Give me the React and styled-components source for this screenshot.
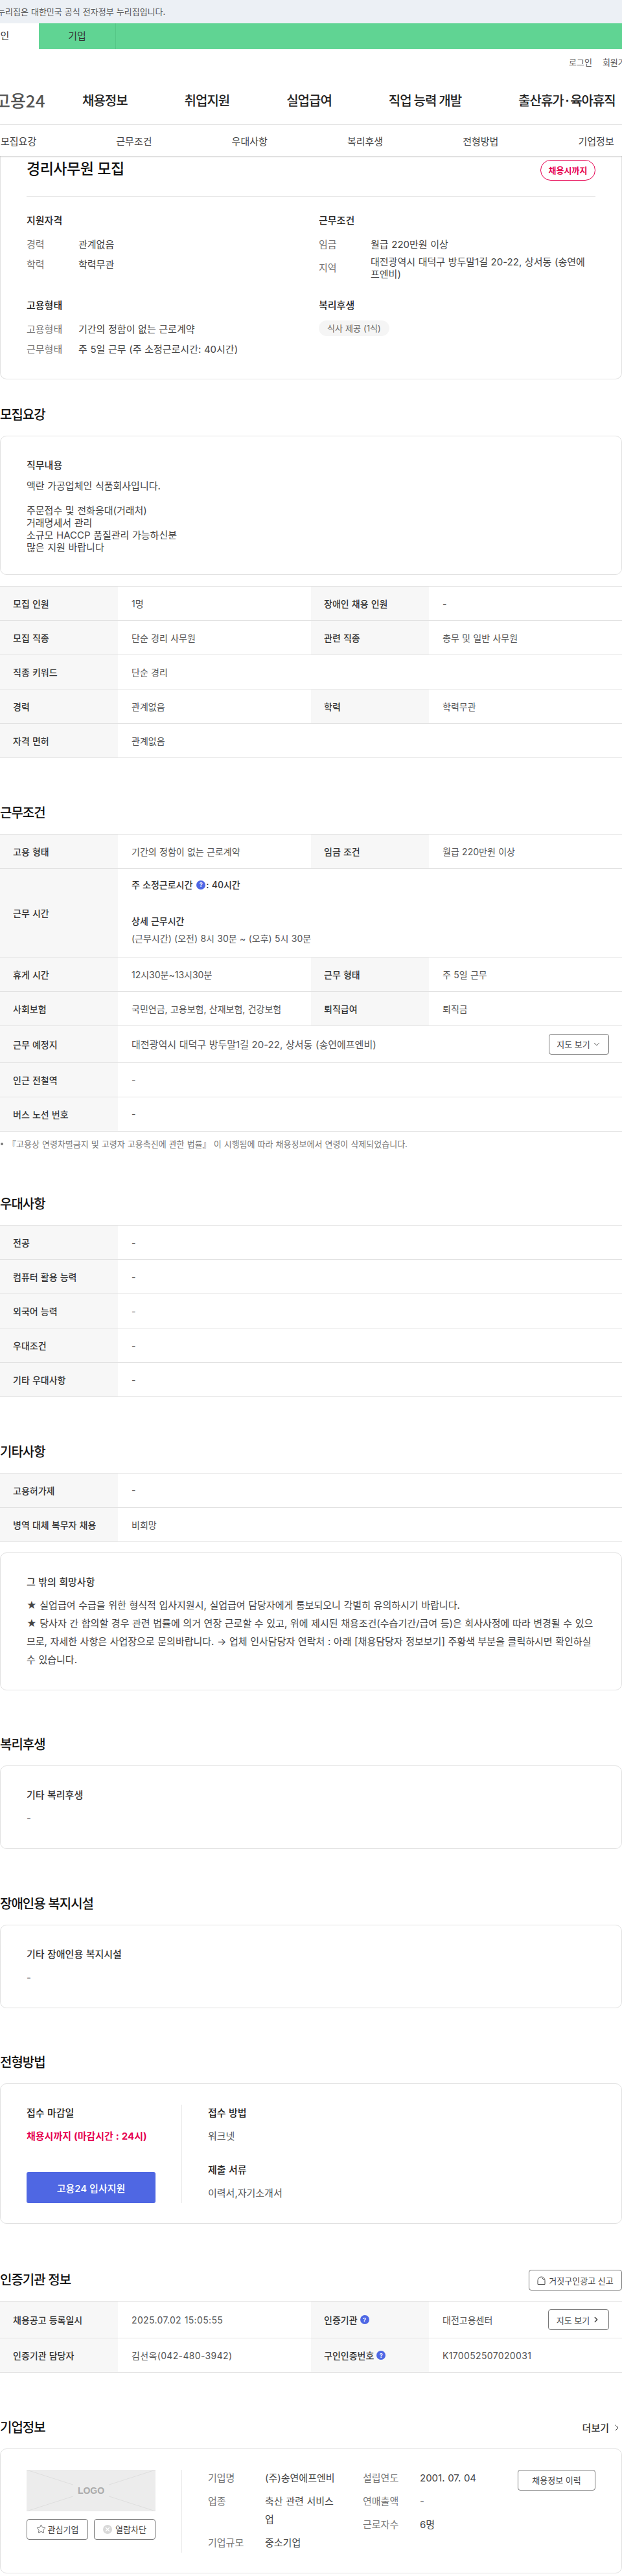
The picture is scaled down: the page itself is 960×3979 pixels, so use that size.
import React from 'react'
import styled, { createGlobalStyle } from 'styled-components'
import { ChevronDown, ChevronRight, Star } from 'lucide-react'

const GlobalStyle = createGlobalStyle`
  html, body {
    margin: 0;
    padding: 0;
    background: #fff;
    overflow-x: hidden;
  }
  body {
    font-family: Inter, "Noto Sans CJK KR", "Noto Sans", sans-serif;
    word-spacing: 0.03em;
    color: #444;
    font-size: 14px;
  }
  * { box-sizing: border-box; }
`

const Page = styled.div`
  width: 960px;
  height: 3979px;
  overflow: hidden;
`

const GovBar = styled.div`
  height: 36px;
  background: #ecf0f5;
  color: #555;
  font-size: 13px;
  line-height: 36px;
  white-space: nowrap;
  margin-left: -20px;
`

const AudienceBar = styled.div`
  display: flex;
  height: 40px;
  background: #60d493;
  margin-left: -59px;
`

const AudienceTab = styled.div`
  width: 119px;
  text-align: center;
  font-size: 15px;
  line-height: 40px;
  color: #333;
  background: ${props => (props.$active ? '#fff' : 'transparent')};
  border-right: ${props => (props.$active ? '0' : '1px solid #55c585')};
`

const UtilBar = styled.div`
  display: flex;
  gap: 16px;
  height: 40px;
  padding-left: 878px;
  font-size: 13px;
  line-height: 40px;
  white-space: nowrap;
  color: #555;
`

const MainNav = styled.div`
  display: flex;
  align-items: center;
  height: 77px;
  border-bottom: 1px solid #e6e6e6;
  margin-left: -8px;
  white-space: nowrap;
`

const Logo = styled.div`
  width: 135px;
  font-family: "Noto Sans CJK KR", sans-serif;
  font-size: 26px;
  font-weight: 500;
  color: #555;
`

const MainMenu = styled.div`
  display: flex;
  gap: 88px;
  font-family: "Noto Sans CJK KR", sans-serif;
  font-size: 20px;
  font-weight: 500;
  letter-spacing: -1px;
  color: #222;
`

const SubNav = styled.div`
  position: relative;
  z-index: 2;
  display: grid;
  grid-template-columns: repeat(6, 178.3px);
  height: 48px;
  align-items: center;
  padding-left: 1px;
  font-size: 15px;
  color: #444;
  background: #fff;
  box-shadow: 0 1px 2px rgba(0, 0, 0, 0.2);
`

const Card = styled.div`
  border: 1px solid #e1e1e1;
  border-radius: 10px;
  padding: ${props => props.$padding || '34px 40px 32px'};
  margin-top: ${props => props.$top || 0};
`

const SummaryCard = styled(Card)`
  border-top: 0;
  border-radius: 0 0 10px 10px;
  padding: 6px 40px 34px;
`

const TitleRow = styled.div`
  display: flex;
  justify-content: space-between;
  align-items: flex-start;
  height: 57px;
  border-bottom: 1px solid #e8e8e8;
  margin-bottom: 26px;
`

const JobTitle = styled.h1`
  margin: 0;
  font-size: 23px;
  font-weight: 500;
  line-height: 28px;
  letter-spacing: -0.5px;
  color: #111;
`

const DeadlineBadge = styled.div`
  width: 85px;
  height: 32px;
  border: 1px solid #e6004f;
  border-radius: 16px;
  color: #e6004f;
  font-size: 13px;
  font-weight: 700;
  line-height: 30px;
  text-align: center;
  white-space: nowrap;
`

const SummaryGrid = styled.div`
  display: grid;
  grid-template-columns: 451px 427px;
  grid-template-rows: 131px auto;
`

const GroupTitle = styled.h3`
  margin: 0 0 ${props => props.$gap || '15px'};
  font-size: 15px;
  font-weight: 500;
  line-height: ${props => props.$line || '22px'};
  color: #222;
`

const DetailList = styled.div`
  display: flex;
  flex-direction: column;
  gap: ${props => props.$gap || '9px'};
`

const DetailRow = styled.div`
  display: grid;
  grid-template-columns: 80px 1fr;
  align-items: center;
  font-size: 15px;
  line-height: 22px;
`

const DetailLabel = styled.span`
  color: #777;
`

const DetailValue = styled.span`
  max-width: 340px;
  color: #444;
  line-height: ${props => props.$line || '22px'};
`

const Chip = styled.span`
  display: inline-block;
  height: 24px;
  padding: 0 13px;
  border-radius: 12px;
  background: #f5f5f5;
  color: #666;
  font-size: 13px;
  line-height: 24px;
  margin-top: -4px;
`

const Section = styled.section`
  margin-top: ${props => props.$top || '70.5px'};
`

const SectionHead = styled.div`
  display: flex;
  align-items: center;
  justify-content: space-between;
  min-height: 28px;
  margin-bottom: ${props => props.$gap || '18px'};
`

const SectionTitle = styled.h2`
  margin: 0;
  font-size: 20px;
  font-weight: 500;
  line-height: 28px;
  letter-spacing: -1px;
  color: #111;
`

const MoreLink = styled.div`
  display: flex;
  align-items: center;
  gap: 4px;
  font-size: 15px;
  font-weight: 500;
  color: #333;
`

const CardTitle = styled.h4`
  margin: 0 0 ${props => props.$gap || '11px'};
  font-size: 15px;
  font-weight: 500;
  line-height: 22px;
  color: #333;
`

const CardText = styled.div`
  font-size: 15px;
  line-height: ${props => props.$line || '19px'};
  color: #444;
  white-space: pre-line;
`

const Table = styled.div`
  border-top: 1px solid #dcdcdc;
  margin-top: ${props => props.$top || 0};
`

const Row = styled.div`
  display: grid;
  grid-template-columns: ${props => (props.$wide ? '182px 1fr' : '182px 298px 182px 298px')};
  min-height: ${props => props.$height || '53px'};
  border-bottom: 1px solid #e2e2e2;
`

const Th = styled.div`
  display: flex;
  align-items: center;
  gap: 4px;
  padding-left: 20px;
  background: #f7f7f7;
  color: #333;
  font-size: 14px;
  font-weight: 500;
`

const Td = styled.div`
  display: flex;
  align-items: center;
  justify-content: space-between;
  padding: 0 20px 0 21px;
  color: #555;
  font-size: ${props => props.$size || '14px'};
  letter-spacing: ${props => (props.$num ? '0.35px' : 'normal')};
`

const HoursCell = styled.div`
  display: flex;
  flex-direction: column;
  padding: 15px 21px 0;
  color: #555;
  font-size: 14px;
  line-height: 20px;
`

const HoursStrong = styled.div`
  display: flex;
  align-items: center;
  color: #333;
  font-weight: 500;
  margin-bottom: ${props => props.$gap || 0};
`

const HelpDot = styled.span`
  display: inline-flex;
  align-items: center;
  justify-content: center;
  flex: none;
  width: 14px;
  height: 14px;
  margin: ${props => (props.$inline ? '0 1px 0 6px' : '0')};
  border-radius: 50%;
  background: #4e67e4;
  color: #fff;
  font-size: 9px;
  font-weight: 700;
  line-height: 1;
`

const OutlineButton = styled.button`
  display: inline-flex;
  align-items: center;
  justify-content: center;
  gap: ${props => props.$gap || '3px'};
  flex: none;
  width: ${props => props.$width || 'auto'};
  height: 32px;
  padding: 0;
  border: 1px solid #777;
  border-radius: 4px;
  background: #fff;
  color: #444;
  font-family: inherit;
  font-size: 13px;
  white-space: nowrap;
`

const Footnote = styled.div`
  display: flex;
  gap: 7px;
  align-items: center;
  margin: 10px 0 3.5px;
  padding-left: 1px;
  color: #777;
  font-size: 13px;
  line-height: 18px;
  &::before {
    content: '';
    width: 4px;
    height: 4px;
    border-radius: 50%;
    background: #777;
  }
`

const ApplyLayout = styled.div`
  display: grid;
  grid-template-columns: 240px 1fr;
`

const ApplyLeft = styled.div`
  display: flex;
  flex-direction: column;
  border-right: 1px solid #e8e8e8;
  padding-right: 40px;
`

const ApplyRight = styled.div`
  padding-left: 40px;
`

const DeadlineText = styled.div`
  color: #e6004f;
  font-size: 15px;
  font-weight: 700;
  line-height: 22px;
  white-space: nowrap;
`

const ApplyButton = styled.button`
  height: 48px;
  margin-top: 44px;
  border: 0;
  border-radius: 3px;
  background: #4f67e3;
  color: #fff;
  font-family: inherit;
  font-size: 15px;
  font-weight: 500;
`

const ApplyBlock = styled.div`
  margin-bottom: ${props => props.$gap || 0};
`

const ApplyValue = styled.div`
  font-size: 15px;
  line-height: 22px;
  color: #555;
`

const CompanyLayout = styled.div`
  display: grid;
  grid-template-columns: 240px 1fr;
`

const CompanyLeft = styled.div`
  height: 128px;
  border-right: 1px solid #e8e8e8;
  padding-right: 40px;
`

const LogoBox = styled.div`
  position: relative;
  display: flex;
  align-items: center;
  justify-content: center;
  height: 64px;
  background: #ececec;
  color: #aaa;
  font-family: "Liberation Sans", sans-serif;
  font-size: 14px;
  font-weight: 700;
  svg { position: absolute; inset: 0; width: 100%; height: 100%; }
  span { position: relative; padding: 2px 7px; background: #ececec; }
`

const CompanyButtons = styled.div`
  display: flex;
  justify-content: space-between;
  margin-top: 12px;
`

const BlockDot = styled.span`
  display: inline-flex;
  align-items: center;
  justify-content: center;
  width: 14px;
  height: 14px;
  border-radius: 50%;
  background: #d8d8d8;
`

const CompanyRight = styled.div`
  display: grid;
  grid-template-columns: 239px 239px 120px;
  padding-left: 40px;
`

const CompanyColumn = styled.div`
  display: flex;
  flex-direction: column;
  gap: 8px;
  margin-top: -1px;
  padding-right: 36px;
`

const CompanyRow = styled.div`
  display: grid;
  grid-template-columns: 88px 1fr;
  font-size: 15px;
  line-height: 28px;
`

const SirenIcon = () => (
  <svg width="13" height="13" viewBox="0 0 13 13" fill="none" stroke="#444" strokeWidth="1">
    <path d="M1 12.5V6.5a5.5 5.5 0 0 1 11 0v6z" />
    <path d="M8 3.2a3.4 3.4 0 0 1 1.8 2.8" />
  </svg>
)

const Cross = () => (
  <svg width="8" height="8" viewBox="0 0 8 8" stroke="#fff" strokeWidth="1.4">
    <path d="M1 1l6 6M7 1L1 7" />
  </svg>
)

const quals = [
  ['모집 인원', '1명', '장애인 채용 인원', '-'],
  ['모집 직종', '단순 경리 사무원', '관련 직종', '총무 및 일반 사무원'],
  ['직종 키워드', '단순 경리'],
  ['경력', '관계없음', '학력', '학력무관'],
  ['자격 면허', '관계없음'],
]

const prefer = [
  ['전공', '-'],
  ['컴퓨터 활용 능력', '-'],
  ['외국어 능력', '-'],
  ['우대조건', '-'],
  ['기타 우대사항', '-'],
]

const etc = [
  ['고용허가제', '-'],
  ['병역 대체 복무자 채용', '비희망'],
]

const DataRow = ({ cells }) => (
  <Row $wide={cells.length === 2}>
    <Th>{cells[0]}</Th>
    <Td>{cells[1]}</Td>
    {cells.length > 2 && <Th>{cells[2]}</Th>}
    {cells.length > 2 && <Td>{cells[3]}</Td>}
  </Row>
)

export default function App() {
  return (
    <Page>
      <GlobalStyle />
      <GovBar>이 누리집은 대한민국 공식 전자정부 누리집입니다.</GovBar>
      <AudienceBar>
        <AudienceTab $active>개인</AudienceTab>
        <AudienceTab>기업</AudienceTab>
      </AudienceBar>
      <UtilBar>
        <span>로그인</span>
        <span>회원가입</span>
      </UtilBar>
      <MainNav>
        <Logo>고용24</Logo>
        <MainMenu>
          <span>채용정보</span>
          <span>취업지원</span>
          <span>실업급여</span>
          <span>직업 능력 개발</span>
          <span>출산휴가·육아휴직</span>
        </MainMenu>
      </MainNav>
      <SubNav>
        <span>모집요강</span>
        <span>근무조건</span>
        <span>우대사항</span>
        <span>복리후생</span>
        <span>전형방법</span>
        <span>기업정보</span>
      </SubNav>

      <SummaryCard>
        <TitleRow>
          <JobTitle>경리사무원 모집</JobTitle>
          <DeadlineBadge>채용시까지</DeadlineBadge>
        </TitleRow>
        <SummaryGrid>
          <div>
            <GroupTitle>지원자격</GroupTitle>
            <DetailList>
              <DetailRow>
                <DetailLabel>경력</DetailLabel>
                <DetailValue>관계없음</DetailValue>
              </DetailRow>
              <DetailRow>
                <DetailLabel>학력</DetailLabel>
                <DetailValue>학력무관</DetailValue>
              </DetailRow>
            </DetailList>
          </div>
          <div>
            <GroupTitle>근무조건</GroupTitle>
            <DetailList $gap="6px">
              <DetailRow>
                <DetailLabel>임금</DetailLabel>
                <DetailValue>월급 220만원 이상</DetailValue>
              </DetailRow>
              <DetailRow>
                <DetailLabel>지역</DetailLabel>
                <DetailValue $line="19px">대전광역시 대덕구 방두말1길 20-22, 상서동 (송연에프엔비)</DetailValue>
              </DetailRow>
            </DetailList>
          </div>
          <div>
            <GroupTitle>고용형태</GroupTitle>
            <DetailList>
              <DetailRow>
                <DetailLabel>고용형태</DetailLabel>
                <DetailValue>기간의 정함이 없는 근로계약</DetailValue>
              </DetailRow>
              <DetailRow>
                <DetailLabel>근무형태</DetailLabel>
                <DetailValue>주 5일 근무 (주 소정근로시간: 40시간)</DetailValue>
              </DetailRow>
            </DetailList>
          </div>
          <div>
            <GroupTitle>복리후생</GroupTitle>
            <Chip>식사 제공 (1식)</Chip>
          </div>
        </SummaryGrid>
      </SummaryCard>

      <Section $top="41px">
        <SectionHead>
          <SectionTitle>모집요강</SectionTitle>
        </SectionHead>
        <Card>
          <CardTitle>직무내용</CardTitle>
          <CardText>{'액란 가공업체인  식품회사입니다.\n\n주문접수 및 전화응대(거래처)\n거래명세서 관리\n소규모 HACCP 품질관리 가능하신분\n많은 지원 바랍니다'}</CardText>
        </Card>
        <Table $top="17px">
          {quals.map(cells => (
            <DataRow key={cells[0]} cells={cells} />
          ))}
        </Table>
      </Section>

      <Section>
        <SectionHead>
          <SectionTitle>근무조건</SectionTitle>
        </SectionHead>
        <Table>
          <DataRow cells={['고용 형태', '기간의 정함이 없는 근로계약', '임금 조건', '월급 220만원 이상']} />
          <Row $wide $height="137px">
            <Th>근무 시간</Th>
            <HoursCell>
              <HoursStrong $gap="36px">
                주 소정근로시간
                <HelpDot $inline>?</HelpDot>
                : 40시간
              </HoursStrong>
              <HoursStrong $gap="7px">상세 근무시간</HoursStrong>
              <div>(근무시간) (오전) 8시 30분 ~ (오후) 5시 30분</div>
            </HoursCell>
          </Row>
          <DataRow cells={['휴게 시간', '12시30분~13시30분', '근무 형태', '주 5일 근무']} />
          <DataRow cells={['사회보험', '국민연금, 고용보험, 산재보험, 건강보험', '퇴직급여', '퇴직금']} />
          <Row $wide $height="57px">
            <Th>근무 예정지</Th>
            <Td $size="15px">
              <span>대전광역시 대덕구 방두말1길 20-22, 상서동 (송연에프엔비)</span>
              <OutlineButton $width="93px">
                지도 보기 <ChevronDown size={14} strokeWidth={1.5} />
              </OutlineButton>
            </Td>
          </Row>
          <DataRow cells={['인근 전철역', '-']} />
          <DataRow cells={['버스 노선 번호', '-']} />
        </Table>
        <Footnote>『고용상 연령차별금지 및 고령자 고용촉진에 관한 법률』 이 시행됨에 따라 채용정보에서 연령이 삭제되었습니다.</Footnote>
      </Section>

      <Section>
        <SectionHead>
          <SectionTitle>우대사항</SectionTitle>
        </SectionHead>
        <Table>
          {prefer.map(cells => (
            <DataRow key={cells[0]} cells={cells} />
          ))}
        </Table>
      </Section>

      <Section>
        <SectionHead>
          <SectionTitle>기타사항</SectionTitle>
        </SectionHead>
        <Table>
          {etc.map(cells => (
            <DataRow key={cells[0]} cells={cells} />
          ))}
        </Table>
        <Card $top="16px">
          <CardTitle>그 밖의 희망사항</CardTitle>
          <CardText $line="28px">
            {'★ 실업급여 수급을 위한 형식적 입사지원시, 실업급여 담당자에게 통보되오니 각별히 유의하시기 바랍니다.\n★ 당사자 간 합의할 경우 관련 법률에 의거 연장 근로할 수 있고, 위에 제시된 채용조건(수습기간/급여 등)은 회사사정에 따라 변경될 수 있으므로, 자세한 사항은 사업장으로 문의바랍니다. → 업체 인사담당자 연락처 : 아래 [채용담당자 정보보기] 주황색 부분을 클릭하시면 확인하실 수 있습니다.'}
          </CardText>
        </Card>
      </Section>

      <Section>
        <SectionHead>
          <SectionTitle>복리후생</SectionTitle>
        </SectionHead>
        <Card $padding="34px 40px 35px">
          <CardTitle $gap="14px">기타 복리후생</CardTitle>
          <CardText $line="22px">-</CardText>
        </Card>
      </Section>

      <Section>
        <SectionHead>
          <SectionTitle>장애인용 복지시설</SectionTitle>
        </SectionHead>
        <Card $padding="34px 40px 35px">
          <CardTitle $gap="14px">기타 장애인용 복지시설</CardTitle>
          <CardText $line="22px">-</CardText>
        </Card>
      </Section>

      <Section>
        <SectionHead>
          <SectionTitle>전형방법</SectionTitle>
        </SectionHead>
        <Card $padding="32px 40px 31px">
          <ApplyLayout>
            <ApplyLeft>
              <GroupTitle $gap="12px" $line="26px">접수 마감일</GroupTitle>
              <DeadlineText>채용시까지 (마감시간 : 24시)</DeadlineText>
              <ApplyButton>고용24 입사지원</ApplyButton>
            </ApplyLeft>
            <ApplyRight>
              <ApplyBlock $gap="28px">
                <GroupTitle $gap="12px" $line="26px">접수 방법</GroupTitle>
                <ApplyValue>워크넷</ApplyValue>
              </ApplyBlock>
              <ApplyBlock>
                <GroupTitle $gap="12px" $line="26px">제출 서류</GroupTitle>
                <ApplyValue>이력서,자기소개서</ApplyValue>
              </ApplyBlock>
            </ApplyRight>
          </ApplyLayout>
        </Card>
      </Section>

      <Section $top="71px">
        <SectionHead $gap="16px">
          <SectionTitle>인증기관 정보</SectionTitle>
          <OutlineButton $width="144px" $gap="5px">
            <SirenIcon /> 거짓구인광고 신고
          </OutlineButton>
        </SectionHead>
        <Table>
          <Row $height="57px">
            <Th>채용공고 등록일시</Th>
            <Td $num>2025.07.02 15:05:55</Td>
            <Th>
              인증기관 <HelpDot>?</HelpDot>
            </Th>
            <Td>
              대전고용센터
              <OutlineButton $width="94px">
                지도 보기 <ChevronRight size={14} strokeWidth={2.5} />
              </OutlineButton>
            </Td>
          </Row>
          <Row>
            <Th>인증기관 담당자</Th>
            <Td $num>김선옥(042-480-3942)</Td>
            <Th>
              구인인증번호 <HelpDot>?</HelpDot>
            </Th>
            <Td $num>K170052507020031</Td>
          </Row>
        </Table>
      </Section>

      <Section>
        <SectionHead>
          <SectionTitle>기업정보</SectionTitle>
          <MoreLink>
            더보기 <ChevronRight size={16} strokeWidth={1.5} />
          </MoreLink>
        </SectionHead>
        <Card $padding="32px 40px 31px">
          <CompanyLayout>
            <CompanyLeft>
              <LogoBox>
                <svg viewBox="0 0 199 64" preserveAspectRatio="none" stroke="#dedede" strokeWidth="1">
                  <path d="M0 0l199 64M199 0L0 64" />
                </svg>
                <span>LOGO</span>
              </LogoBox>
              <CompanyButtons>
                <OutlineButton $width="95px">
                  <Star size={15} strokeWidth={1.3} /> 관심기업
                </OutlineButton>
                <OutlineButton $width="95px" $gap="5px">
                  <BlockDot>
                    <Cross />
                  </BlockDot>
                  열람차단
                </OutlineButton>
              </CompanyButtons>
            </CompanyLeft>
            <CompanyRight>
              <CompanyColumn>
                <CompanyRow>
                  <DetailLabel>기업명</DetailLabel>
                  <span>(주)송연에프엔비</span>
                </CompanyRow>
                <CompanyRow>
                  <DetailLabel>업종</DetailLabel>
                  <span>축산 관련 서비스업</span>
                </CompanyRow>
                <CompanyRow>
                  <DetailLabel>기업규모</DetailLabel>
                  <span>중소기업</span>
                </CompanyRow>
              </CompanyColumn>
              <CompanyColumn>
                <CompanyRow>
                  <DetailLabel>설립연도</DetailLabel>
                  <span>2001. 07. 04</span>
                </CompanyRow>
                <CompanyRow>
                  <DetailLabel>연매출액</DetailLabel>
                  <span>-</span>
                </CompanyRow>
                <CompanyRow>
                  <DetailLabel>근로자수</DetailLabel>
                  <span>6명</span>
                </CompanyRow>
              </CompanyColumn>
              <div>
                <OutlineButton $width="120px">채용정보 이력</OutlineButton>
              </div>
            </CompanyRight>
          </CompanyLayout>
        </Card>
      </Section>
    </Page>
  )
}
